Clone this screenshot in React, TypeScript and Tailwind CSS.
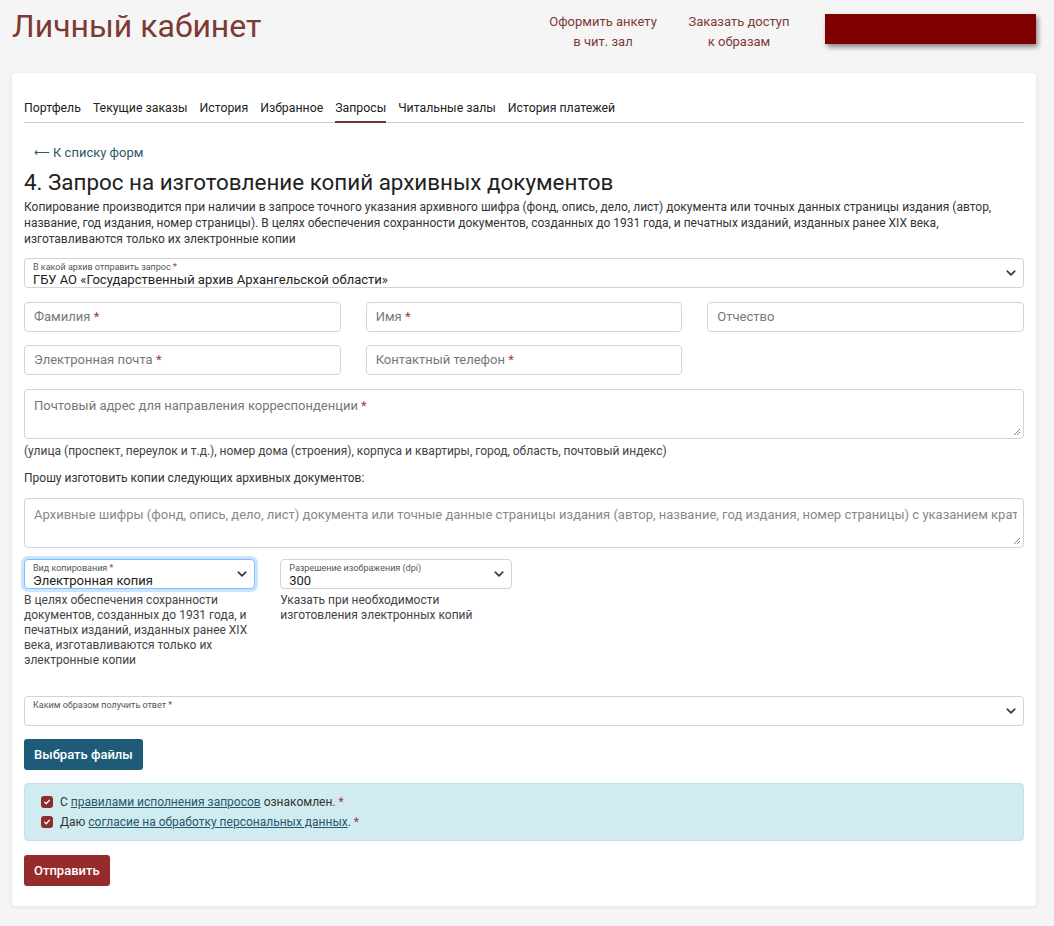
import React from 'react';

const Star = () => <span className="text-[#a33a3a]">*</span>;

const Chevron = () => (
  <svg className="absolute right-[7px] top-1/2 -translate-y-1/2 w-[10px] h-[10px]" viewBox="0 0 16 16">
    <path d="M2 5l6 6 6-6" fill="none" stroke="#343a40" strokeWidth="2.6" strokeLinecap="round" strokeLinejoin="round" />
  </svg>
);

const FloatSelect = ({ label, value, focused, required = true }: { label: string; value?: string; focused?: boolean; required?: boolean }) => (
  <div
    className={`relative h-[30px] rounded-[4px] border bg-white pl-[8px] pr-6 ${
      focused ? 'border-[#80bdff] shadow-[0_0_0_3px_rgba(0,123,255,0.2)]' : 'border-[#ced4da]'
    }`}
  >
    <div className="text-[9px] leading-[10px] pt-[3px] text-[#555]">
      {label} {required && <Star />}
    </div>
    <div className="text-[13px] leading-[15px] text-[#222]">{value}</div>
    <Chevron />
  </div>
);

const Input = ({ placeholder, required = true }: { placeholder: string; required?: boolean }) => (
  <div className="h-[30px] rounded-[4px] border border-[#ced4da] bg-white px-[9px] flex items-center text-[13px] text-[#777]">
    {placeholder}&nbsp;{required && <Star />}
  </div>
);

const Resize = () => (
  <svg className="absolute right-[2px] bottom-[2px] w-[8px] h-[8px]" viewBox="0 0 8 8">
    <path d="M7 1L1 7M7 4L4 7" stroke="#888" strokeWidth="1" />
  </svg>
);

const Check = () => (
  <span className="w-[12px] h-[12px] rounded-[3px] bg-[#8e2d2d] flex items-center justify-center shrink-0">
    <svg viewBox="0 0 10 10" className="w-[8px] h-[8px]">
      <path d="M2 5.2l2 2 4-4.4" fill="none" stroke="#fff" strokeWidth="1.6" strokeLinecap="round" strokeLinejoin="round" />
    </svg>
  </span>
);

export default function App() {
  const tabs = ['Портфель', 'Текущие заказы', 'История', 'Избранное', 'Запросы', 'Читальные залы', 'История платежей'];

  return (
    <div className="min-h-[926px] bg-[#f5f5f5] font-['Roboto',sans-serif] text-[#222]">
      {/* header */}
      <div className="flex items-start px-[12px] pt-[9px] h-[73px]">
        <h1 className="text-[32px] leading-[34px] text-[#7d3a35] font-normal">Личный кабинет</h1>
        <div className="ml-auto flex items-start">
          <a className="text-[13px] leading-[20px] text-[#7d3a35] text-center mt-[3px] w-[120px]">
            Оформить анкету<br />в чит. зал
          </a>
          <a className="text-[13px] leading-[20px] text-[#7d3a35] text-center mt-[3px] w-[110px] ml-[21px]">
            Заказать доступ<br />к образам
          </a>
          <div className="w-[211px] h-[30px] bg-[#800000] mt-[5px] ml-[31px] mr-[6px] shadow-[2px_3px_5px_rgba(0,0,0,0.45)]" />
        </div>
      </div>

      {/* card */}
      <div className="mx-[12px] mr-[18px] bg-white rounded-[4px] shadow-[0_1px_4px_rgba(0,0,0,0.08)] px-[12px] pt-[27px] pb-[20px]">
        <div className="flex border-b border-[#ccc] text-[12.3px] text-[#222]">
          {tabs.map((t) => (
            <div
              key={t}
              className={`mr-[12px] pb-[5px] leading-[16px] ${t === 'Запросы' ? 'border-b-2 border-[#6b3a33] -mb-px' : ''}`}
            >
              {t}
            </div>
          ))}
        </div>

        <a className="flex items-center gap-[3px] mt-[22px] ml-[10px] text-[13px] leading-[16px] text-[#30586a]">
          <span className="text-[11px]">⟵</span>К списку форм
        </a>
        <h2 className="mt-[7px] text-[22.4px] leading-[28px] font-normal text-[#222]">
          4. Запрос на изготовление копий архивных документов
        </h2>
        <p className="mt-[3px] text-[12px] leading-[16px] text-[#333]">
          Копирование производится при наличии в запросе точного указания архивного шифра (фонд, опись, дело, лист) документа или точных данных страницы издания (автор, название, год издания, номер страницы). В целях обеспечения сохранности документов, созданных до 1931 года, и печатных изданий, изданных ранее XIX века, изготавливаются только их электронные копии
        </p>

        <div className="mt-[11px]">
          <FloatSelect label="В какой архив отправить запрос" value="ГБУ АО «Государственный архив Архангельской области»" />
        </div>

        <div className="grid grid-cols-3 gap-x-[25px] gap-y-[13px] mt-[14px]">
          <Input placeholder="Фамилия" />
          <Input placeholder="Имя" />
          <Input placeholder="Отчество" required={false} />
          <Input placeholder="Электронная почта" />
          <Input placeholder="Контактный телефон" />
        </div>

        <div className="relative mt-[14px] h-[50px] rounded-[4px] border border-[#ced4da] px-[9px] pt-[6px] text-[13px] text-[#777]">
          Почтовый адрес для направления корреспонденции <Star />
          <Resize />
        </div>
        <div className="mt-[4px] text-[12px] leading-[16px] text-[#444]">
          (улица (проспект, переулок и т.д.), номер дома (строения), корпуса и квартиры, город, область, почтовый индекс)
        </div>

        <div className="mt-[11px] text-[12px] leading-[16px] text-[#333]">Прошу изготовить копии следующих архивных документов:</div>

        <div className="relative mt-[12px] h-[50px] rounded-[4px] border border-[#ced4da] pl-[9px] pr-[6px] pt-[6px] text-[13px] text-[#888]">
          <div className="whitespace-nowrap overflow-hidden">
            Архивные шифры (фонд, опись, дело, лист) документа или точные данные страницы издания (автор, название, год издания, номер страницы) с указанием кратко
          </div>
          <Resize />
        </div>

        <div className="grid grid-cols-4 gap-x-[25px] mt-[11px]">
          <div>
            <FloatSelect label="Вид копирования" value="Электронная копия" focused />
            <div className="mt-[4px] text-[12px] leading-[15px] text-[#444]">
              В целях обеспечения сохранности документов, созданных до 1931 года, и печатных изданий, изданных ранее XIX века, изготавливаются только их электронные копии
            </div>
          </div>
          <div>
            <FloatSelect label="Разрешение изображения (dpi)" value="300" required={false} />
            <div className="mt-[4px] text-[12px] leading-[15px] text-[#444]">
              Указать при необходимости изготовления электронных копий
            </div>
          </div>
        </div>

        <div className="mt-[28px]">
          <FloatSelect label="Каким образом получить ответ" />
        </div>

        <button className="mt-[13px] h-[31px] px-[10px] rounded-[3px] bg-[#1d5b79] text-white text-[13px] font-medium">
          Выбрать файлы
        </button>

        <div className="mt-[13px] rounded-[4px] border border-[#bee5eb] bg-[#d1ecf1] px-[16px] py-[8px] text-[12px] leading-[20px] text-[#333]">
          <div className="flex items-center gap-[7px]">
            <Check />
            <span>
              С <a className="underline text-[#2a5669]">правилами исполнения запросов</a> ознакомлен. <Star />
            </span>
          </div>
          <div className="flex items-center gap-[7px]">
            <Check />
            <span>
              Даю <a className="underline text-[#2a5669]">согласие на обработку персональных данных</a>. <Star />
            </span>
          </div>
        </div>

        <button className="mt-[14px] h-[31px] px-[10px] rounded-[3px] bg-[#962b2b] text-white text-[13px] font-medium">
          Отправить
        </button>
      </div>
    </div>
  );
}
